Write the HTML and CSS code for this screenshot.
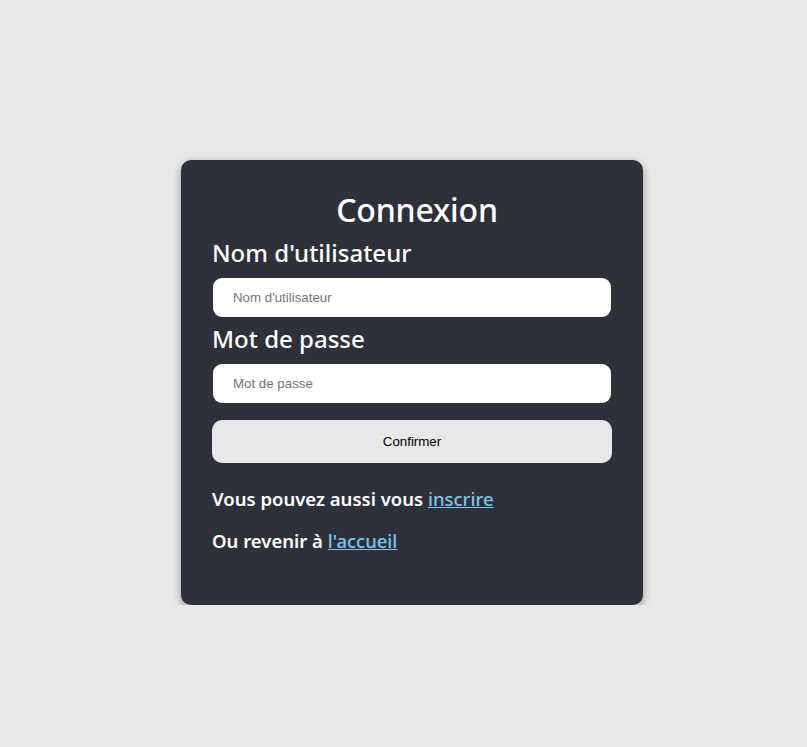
FILE: index.html
```html
<!DOCTYPE html>
<html lang="fr">
<head>
<meta charset="utf-8">
<title>Connexion</title>
<link rel="stylesheet" href="styles.css">
</head>
<body>
<main class="page">
  <form class="card">
    <h1 class="title">Connexion</h1>
    <label class="label" for="user">Nom d'utilisateur</label>
    <input class="field" id="user" type="text" placeholder="Nom d'utilisateur">
    <label class="label" for="pass">Mot de passe</label>
    <input class="field" id="pass" type="password" placeholder="Mot de passe">
    <button class="submit" type="button">Confirmer</button>
    <p class="note">Vous pouvez aussi vous <a href="#">inscrire</a></p>
    <p class="note">Ou revenir à <a href="#">l'accueil</a></p>
  </form>
</main>
</body>
</html>
```

FILE: styles.css
```css
html, body {
  margin: 0;
  padding: 0;
  background: #e8e8e8;
}
.page {
  padding: 160px 0 0 181px;
}
.card {
  box-sizing: border-box;
  width: 462px;
  height: 445px;
  background: #2f313a;
  border-radius: 10px;
  box-shadow: 0 3px 8px rgba(0,0,0,0.35);
  padding: 28px 31px 0 31px;
  display: flex;
  flex-direction: column;
  font-family: "Noto Sans", sans-serif;
  color: #ffffff;
}
.title {
  margin: 0 0 5px 0;
  padding-left: 10px;
  text-align: center;
  font-size: 32px;
  font-weight: 500;
  line-height: 44px;
  letter-spacing: -0.2px;
}
.label {
  font-size: 24px;
  font-weight: 500;
  line-height: 32px;
  margin: 0 0 9px 0;
}
.field {
  box-sizing: border-box;
  width: 398px;
  height: 39px;
  margin: 0 0 6px 1px;
  border: none;
  border-radius: 9px;
  background: #ffffff;
  padding: 0 20px;
  font-family: "Liberation Sans", Arial, sans-serif;
  font-size: 13.3px;
  outline: none;
}
.field::placeholder {
  color: #757575;
}
.field + .label + .field {
  margin-bottom: 17px;
}
.submit {
  width: 400px;
  height: 43px;
  border: none;
  border-radius: 10px;
  background: #e8e8e8;
  font-family: "Liberation Sans", Arial, sans-serif;
  font-size: 13.3px;
  color: #000;
  margin-bottom: 22px;
}
.note {
  margin: 0 0 14px 0;
  font-size: 18.5px;
  font-weight: 600;
  line-height: 28px;
}
.note a {
  color: #7cc6ed;
  font-weight: 500;
}
```
